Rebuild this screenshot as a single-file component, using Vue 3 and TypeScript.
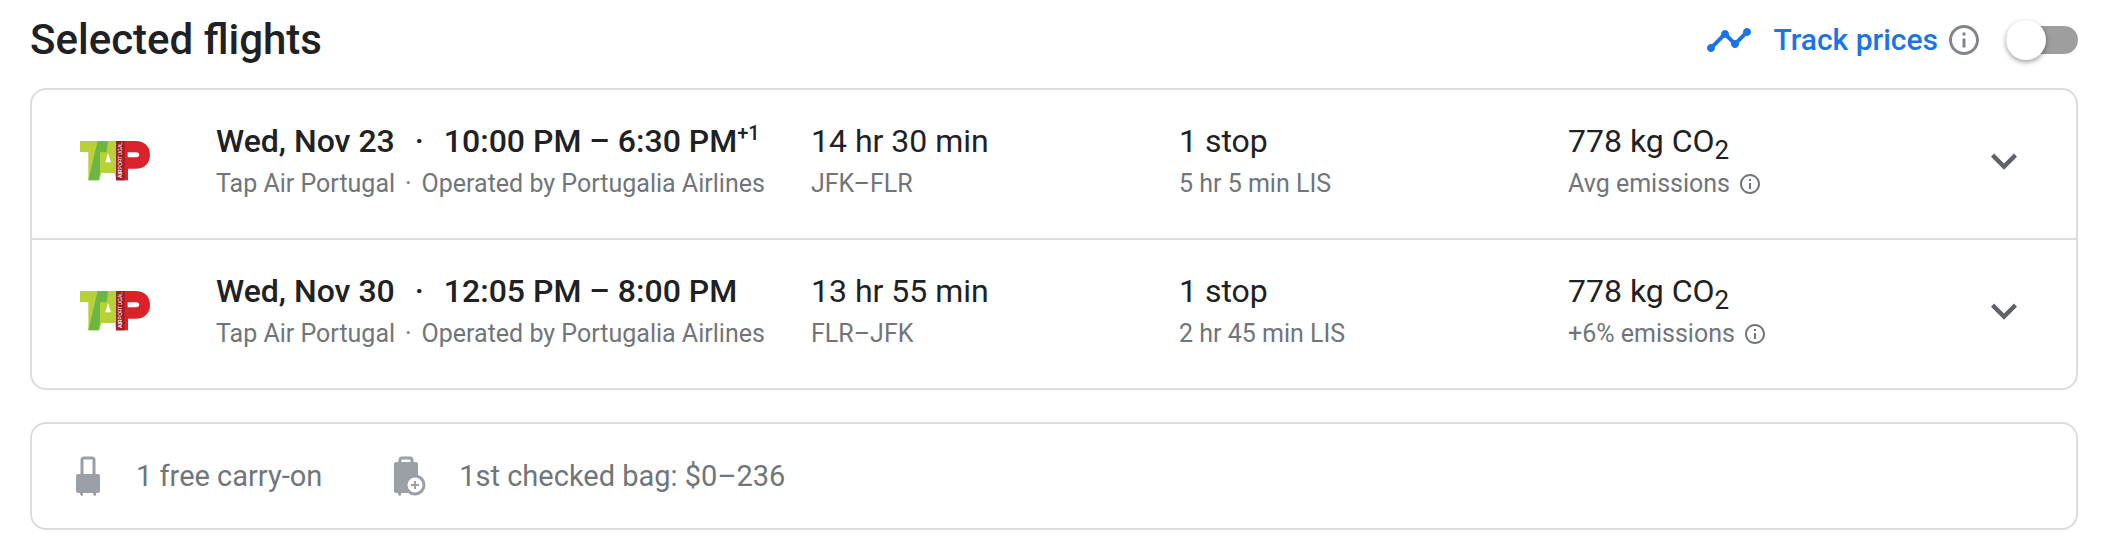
<script setup lang="ts">
import { ref } from 'vue'

interface Flight {
  date: string
  times: string
  dayOffset?: string
  carrier: string
  operator: string
  duration: string
  route: string
  stops: string
  layover: string
  emissions: string
}

const flights: Flight[] = [
  {
    date: 'Wed, Nov 23',
    times: '10:00 PM – 6:30 PM',
    dayOffset: '+1',
    carrier: 'Tap Air Portugal',
    operator: 'Operated by Portugalia Airlines',
    duration: '14 hr 30 min',
    route: 'JFK–FLR',
    stops: '1 stop',
    layover: '5 hr 5 min LIS',
    emissions: 'Avg emissions',
  },
  {
    date: 'Wed, Nov 30',
    times: '12:05 PM – 8:00 PM',
    carrier: 'Tap Air Portugal',
    operator: 'Operated by Portugalia Airlines',
    duration: '13 hr 55 min',
    route: 'FLR–JFK',
    stops: '1 stop',
    layover: '2 hr 45 min LIS',
    emissions: '+6% emissions',
  },
]

const tracking = ref(false)
const infoPath =
  'M11 17h2v-6h-2v6zm1-15C6.48 2 2 6.48 2 12s4.48 10 10 10 10-4.48 10-10S17.52 2 12 2zm0 18c-4.41 0-8-3.59-8-8s3.59-8 8-8 8 3.59 8 8-3.59 8-8 8zM11 9h2V7h-2v2z'
</script>

<template>
  <main class="page">
    <header class="heading">
      <h1 class="title">Selected flights</h1>
      <div class="track">
        <svg class="trend" viewBox="0 0 24 24" aria-hidden="true">
          <path
            d="M23 8c0 1.1-.9 2-2 2-.18 0-.35-.02-.51-.07l-3.56 3.55c.05.16.07.34.07.52 0 1.1-.9 2-2 2s-2-.9-2-2c0-.18.02-.36.07-.52l-2.55-2.55c-.16.05-.34.07-.52.07s-.36-.02-.52-.07l-4.55 4.56c.05.16.07.33.07.51 0 1.1-.9 2-2 2s-2-.9-2-2 .9-2 2-2c.18 0 .35.02.51.07l4.56-4.55C8.02 9.36 8 9.18 8 9c0-1.1.9-2 2-2s2 .9 2 2c0 .18-.02.36-.07.52l2.55 2.55c.16-.05.34-.07.52-.07s.36.02.52.07l3.55-3.56C19.02 8.35 19 8.18 19 8c0-1.1.9-2 2-2s2 .9 2 2z"
          />
        </svg>
        <label class="track-label" for="track-prices">Track prices</label>
        <button class="info" type="button" aria-label="About price tracking">
          <svg viewBox="0 0 24 24" aria-hidden="true"><path :d="infoPath" /></svg>
        </button>
        <input id="track-prices" v-model="tracking" class="switch" type="checkbox" role="switch" />
      </div>
    </header>

    <ul class="card flights">
      <li v-for="flight in flights" :key="flight.date" class="flight">
        <svg class="logo" viewBox="0 0 210 120" role="img" aria-label="TAP Air Portugal">
          <path fill="#b9d137" d="M0 0h109v118l-5-22H64l-6 22H25V33H0z" />
          <path fill="#6cb744" d="M53 0h31l-4 34H60v58l-4 26H25l20-84z" />
          <path fill="#fff" d="M84 36l9 28H76z" />
          <path fill="#da222a" d="M108 0h58c29 0 44 18 44 41 0 24-15 42-44 42h-22v35h-36z" />
          <path fill="#a51b25" d="M108 0h26v118h-26z" />
          <path fill="#fff" d="M143 34h25c13 0 13 15 0 15h-25z" />
          <text class="logo-text" transform="translate(127 111) rotate(-90)"><tspan class="logo-air">AIR</tspan>PORTUGAL</text>
        </svg>
        <div class="cell">
          <p class="primary strong">
            {{ flight.date }}<span class="dot">·</span>{{ flight.times }}<sup v-if="flight.dayOffset">{{ flight.dayOffset }}</sup>
          </p>
          <p class="secondary">{{ flight.carrier }}<span class="dot">·</span>{{ flight.operator }}</p>
        </div>
        <div class="cell">
          <p class="primary">{{ flight.duration }}</p>
          <p class="secondary">{{ flight.route }}</p>
        </div>
        <div class="cell">
          <p class="primary">{{ flight.stops }}</p>
          <p class="secondary">{{ flight.layover }}</p>
        </div>
        <div class="cell">
          <p class="primary">778 kg CO<sub>2</sub></p>
          <p class="secondary with-icon">
            {{ flight.emissions }}
            <button class="info small" type="button" aria-label="About emissions">
              <svg viewBox="0 0 24 24" aria-hidden="true"><path :d="infoPath" /></svg>
            </button>
          </p>
        </div>
        <button class="expand" type="button" :aria-label="`Flight details for ${flight.date}`">
          <svg viewBox="0 0 24 24" aria-hidden="true"><path d="M16.59 8.59L12 13.17 7.41 8.59 6 10l6 6 6-6z" /></svg>
        </button>
      </li>
    </ul>

    <ul class="card bags">
      <li class="bag">
        <svg class="carry" viewBox="0 0 24 40" aria-hidden="true">
          <path d="M6 20V4q0-2 2-2h8q2 0 2 2v16" fill="none" stroke="#9aa0a6" stroke-width="3" />
          <path fill="#9aa0a6" d="M2 18h20q2 0 2 2v15q0 2-2 2h-2v1q0 2-1 2t-2-2v-1H7v1q0 2-1 2t-2-2v-1H2q-2 0-2-2V20q0-2 2-2z" />
        </svg>
        1 free carry-on
      </li>
      <li class="bag">
        <svg class="checked" viewBox="0 0 33 40" aria-hidden="true">
          <path d="M6 8V4q0-2 2-2h8q2 0 2 2v4" fill="none" stroke="#9aa0a6" stroke-width="3" />
          <path fill="#9aa0a6" d="M2 6h20q2 0 2 2v29H7v1q0 2-1 2t-2-2v-1H2q-2 0-2-2V8q0-2 2-2z" />
          <circle cx="21" cy="29" r="9" fill="#fff" stroke="#9aa0a6" stroke-width="3" />
          <path d="M21 25v8M17 29h8" stroke="#9aa0a6" stroke-width="2" />
        </svg>
        1st checked bag: $0–236
      </li>
    </ul>
  </main>
</template>

<style>
body {
  margin: 0;
  background: #fff;
}
</style>

<style scoped>
.page {
  padding: 0 28px 0 30px;
  font-family: Roboto, "Liberation Sans", sans-serif;
  color: #202124;
}

.heading {
  display: flex;
  align-items: center;
  justify-content: space-between;
  height: 80px;
  margin-bottom: 8px;
}

.title {
  margin: 0;
  font-size: 42px;
  font-weight: 500;
  line-height: 48px;
}

.track {
  display: flex;
  align-items: center;
}

.trend {
  width: 48px;
  height: 48px;
  margin-right: 20px;
  fill: #1a73e8;
}

.track-label {
  margin-right: 8px;
  color: #1a73e8;
  font-size: 30px;
  font-weight: 500;
  line-height: 40px;
}

.info,
.expand {
  display: flex;
  padding: 0;
  border: 0;
  background: none;
  cursor: pointer;
}

.info svg {
  width: 36px;
  height: 36px;
  fill: #80868b;
}

.info.small svg {
  width: 24px;
  height: 24px;
  fill: #70757a;
}

.switch {
  appearance: none;
  display: flex;
  align-items: center;
  width: 72px;
  height: 28px;
  margin: 0 0 0 24px;
  border-radius: 14px;
  background: #9e9e9e;
  cursor: pointer;
}

.switch::before {
  content: "";
  width: 40px;
  height: 40px;
  border-radius: 50%;
  background: #fff;
  box-shadow: 0 2px 5px rgba(0, 0, 0, 0.4);
}

.switch:checked {
  justify-content: flex-end;
  background: #8ab4f8;
}

.card {
  margin: 0 0 32px;
  padding: 0;
  border: 2px solid #dadce0;
  border-radius: 16px;
  list-style: none;
}

.flight {
  display: grid;
  grid-template-columns: 136px 595fr 368fr 389fr 410fr 52px;
  align-items: center;
  padding: 28px 46px 34px 48px;
}

.flight + .flight {
  border-top: 2px solid #dadce0;
}

.logo {
  width: 70px;
  height: 40px;
}

.logo-text {
  fill: #fff;
  font-family: "Liberation Sans", Arial, sans-serif;
  font-size: 15px;
}

.logo-air {
  font-weight: 700;
}

.primary,
.secondary {
  margin: 0;
  white-space: nowrap;
}

.primary {
  font-size: 32px;
  line-height: 46px;
}

.strong {
  font-weight: 500;
}

.dot {
  margin: 0 20px;
}

.secondary .dot {
  margin: 0 10px;
}

sup,
sub {
  line-height: 0;
}

sup {
  font-size: 20px;
}

sub {
  font-size: 26px;
}

.secondary {
  color: #70757a;
  font-size: 25px;
  line-height: 40px;
}

.with-icon {
  display: flex;
  align-items: center;
  gap: 8px;
}

.expand svg {
  width: 52px;
  height: 52px;
  fill: #5f6368;
}

.bags {
  display: flex;
  gap: 72px;
  margin-bottom: 0;
  padding: 32px 44px;
}

.bag {
  display: flex;
  align-items: center;
  gap: 32px;
  color: #70757a;
  font-size: 29px;
  line-height: 40px;
}

.carry {
  width: 24px;
  height: 40px;
  margin-right: 4px;
}

.checked {
  width: 33px;
  height: 40px;
}
</style>
